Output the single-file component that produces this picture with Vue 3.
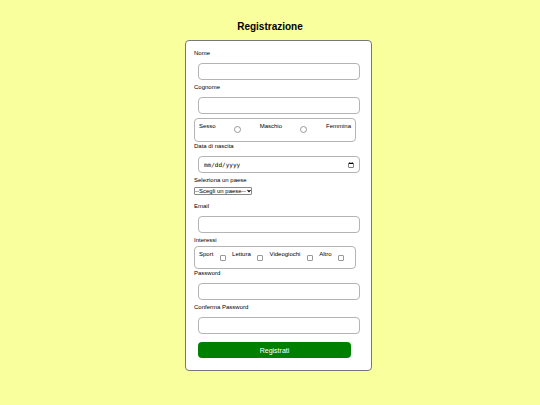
<template>
  <main class="page">
    <h1 class="page__title">Registrazione</h1>

    <form class="form" @submit.prevent="submit">
      <div class="form__row">
        <label for="nome">Nome</label>
        <input id="nome" v-model="form.nome" type="text" class="form__input" />
      </div>

      <div class="form__row">
        <label for="cognome">Cognome</label>
        <input id="cognome" v-model="form.cognome" type="text" class="form__input" />
      </div>

      <fieldset class="form__group form__group--radios" aria-label="Sesso">
        <span>Sesso</span>
        <template v-for="sesso in sessi" :key="sesso">
          <input
            :id="sesso"
            v-model="form.sesso"
            type="radio"
            name="sesso"
            :value="sesso"
            class="form__radio"
          />
          <label :for="sesso">{{ sesso }}</label>
        </template>
      </fieldset>

      <div class="form__row">
        <label for="data">Data di nascita</label>
        <input id="data" v-model="form.data" type="date" class="form__input form__input--date" />
      </div>

      <div class="form__row form__row--select">
        <label for="paese">Seleziona un paese</label>
        <div class="form__select-wrap">
          <select id="paese" v-model="form.paese" class="form__select">
            <option value="">--Scegli un paese--</option>
            <option v-for="paese in paesi" :key="paese" :value="paese">{{ paese }}</option>
          </select>
          <svg class="form__arrow" viewBox="0 0 4 4" fill="none" aria-hidden="true">
            <path d="M0.5 1L2 2.7L3.5 1" stroke="#000" stroke-width="1.1" />
          </svg>
        </div>
      </div>

      <div class="form__row">
        <label for="email">Email</label>
        <input id="email" v-model="form.email" type="email" class="form__input" />
      </div>

      <span class="form__caption">Interessi</span>
      <fieldset class="form__group form__group--checks" aria-label="Interessi">
        <template v-for="interesse in interessi" :key="interesse">
          <label :for="interesse">{{ interesse }}</label>
          <input
            :id="interesse"
            v-model="form.interessi"
            type="checkbox"
            :value="interesse"
            class="form__check"
          />
        </template>
      </fieldset>

      <div class="form__row">
        <label for="password">Password</label>
        <input id="password" v-model="form.password" type="password" class="form__input" />
      </div>

      <div class="form__row">
        <label for="conferma">Conferma Password</label>
        <input id="conferma" v-model="form.conferma" type="password" class="form__input" />
      </div>

      <button type="submit" class="form__submit">Registrati</button>
    </form>
  </main>
</template>

<script setup>
import { reactive } from 'vue'

const emit = defineEmits(['submit'])

const sessi = ['Maschio', 'Femmina']
const paesi = ['Italia', 'Francia', 'Germania', 'Spagna']
const interessi = ['Sport', 'Lettura', 'Videogiochi', 'Altro']

const form = reactive({
  nome: '',
  cognome: '',
  sesso: '',
  data: '',
  paese: '',
  email: '',
  interessi: [],
  password: '',
  conferma: '',
})

function submit() {
  emit('submit', { ...form })
}
</script>

<style>
body {
  background: #faff9e;
}
</style>

<style scoped>
.page {
  display: flex;
  flex-direction: column;
  align-items: center;
  padding: 21px 0 32px;
  font-family: "Liberation Sans", Arial, sans-serif;
  font-size: 6px;
  line-height: 8px;
  color: #000;
}

.page__title {
  margin: 0 0 7px;
  font-size: 10px;
  line-height: 12px;
}

.form {
  box-sizing: border-box;
  display: flex;
  flex-direction: column;
  width: calc(35% - 2px);
  min-width: 187px;
  margin-left: 17px;
  padding: 8px 8px 12px;
  border: 1px solid #777;
  border-radius: 4px;
  background: #fff;
}

.form__row {
  display: flex;
  flex-direction: column;
  gap: 6px;
  margin-bottom: 3px;
}

.form__row--select {
  gap: 3px;
  margin-bottom: 7px;
}

.form__input {
  box-sizing: border-box;
  height: 17px;
  margin: 0 3px 0 4px;
  padding: 0 4px;
  border: 1px solid #b4b4b4;
  border-radius: 4px;
  background: #fff;
  font: inherit;
  color: #000;
}

.form__input--date {
  padding: 0 3px 0 5px;
  font-family: "DejaVu Sans Mono", monospace;
}

.form__input--date::-webkit-datetime-edit-month-field,
.form__input--date::-webkit-datetime-edit-day-field,
.form__input--date::-webkit-datetime-edit-year-field {
  padding: 0;
}

.form__group {
  box-sizing: border-box;
  display: flex;
  justify-content: space-between;
  min-width: 0;
  margin: 0 7px 0 0;
  padding: 3px 4px;
  border: 1px solid #b4b4b4;
  border-radius: 4px;
}

.form__group--radios {
  height: 24px;
  margin-top: 1px;
}

.form__group--checks {
  height: 23px;
  padding-right: 11px;
}

.form__radio,
.form__check {
  appearance: none;
  box-sizing: border-box;
  flex-shrink: 0;
  border: 1px solid #999;
  background: #fff;
}

.form__radio {
  width: 7px;
  height: 7px;
  margin: 4px 0 0;
  border-radius: 50%;
}

.form__radio:checked,
.form__check:checked {
  background: #0075ff;
}

.form__check {
  width: 6px;
  height: 6px;
  margin: 5px 0 0;
  border-radius: 1px;
}

.form__caption {
  margin-bottom: 2px;
}

.form__select-wrap {
  display: grid;
  align-self: flex-start;
  align-items: center;
}

.form__select {
  appearance: none;
  box-sizing: border-box;
  grid-area: 1 / 1;
  width: 58px;
  height: 8px;
  margin: 0;
  padding: 0;
  border: 1px solid #888;
  border-radius: 1px;
  background: #fff;
  font: inherit;
  line-height: 6px;
  color: #000;
}

.form__arrow {
  grid-area: 1 / 1;
  justify-self: end;
  width: 4px;
  height: 4px;
  margin-right: 1px;
  pointer-events: none;
}

.form__submit {
  height: 16px;
  margin: 5px 12px 0 4px;
  padding: 0;
  border: none;
  border-radius: 4px;
  background: #008000;
  font-family: inherit;
  font-size: 7px;
  color: #fff;
  cursor: pointer;
}
</style>
